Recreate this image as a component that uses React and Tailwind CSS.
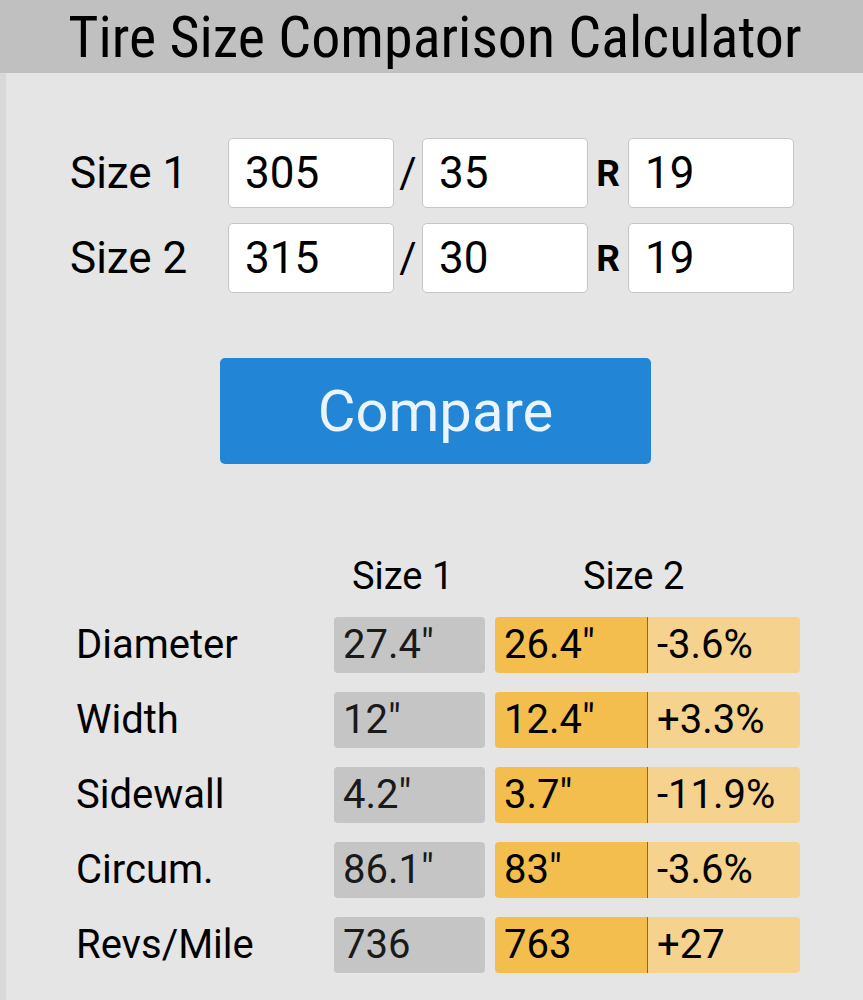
import React, { useState } from 'react';

const rows = [
    { label: 'Diameter', a: '27.4"', b: '26.4"', diff: '-3.6%' },
    { label: 'Width', a: '12"', b: '12.4"', diff: '+3.3%' },
    { label: 'Sidewall', a: '4.2"', b: '3.7"', diff: '-11.9%' },
    { label: 'Circum.', a: '86.1"', b: '83"', diff: '-3.6%' },
    { label: 'Revs/Mile', a: '736', b: '763', diff: '+27' },
];

function SizeInput({ value, onChange }) {
    return (
        <input
            value={value}
            onChange={(e) => onChange(e.target.value)}
            className="w-[166px] h-[70px] bg-white border border-[#c6c6c6] rounded-[5px] pl-[16px] text-[44px] text-black outline-none"
        />
    );
}

function SizeRow({ label, size, setSize }) {
    return (
        <div className="flex items-center">
            <div className="w-[222px] pl-[64px] text-[44px] text-black leading-none whitespace-nowrap">{label}</div>
            <SizeInput value={size.w} onChange={(v) => setSize({ ...size, w: v })} />
            <div className="w-[28px] text-center text-[42px] text-black leading-none">/</div>
            <SizeInput value={size.r} onChange={(v) => setSize({ ...size, r: v })} />
            <div className="w-[40px] text-center text-[37px] text-black font-bold leading-none">R</div>
            <SizeInput value={size.d} onChange={(v) => setSize({ ...size, d: v })} />
        </div>
    );
}

export default function App() {
    const [size1, setSize1] = useState({ w: '305', r: '35', d: '19' });
    const [size2, setSize2] = useState({ w: '315', r: '30', d: '19' });

    return (
        <div className="min-h-[1000px] bg-[#e5e5e5] font-['Roboto',sans-serif]">
            {/* Title bar */}
            <div className="h-[73px] bg-[#c0c0c0] flex items-center justify-center pl-[7px]">
                <h1 className="text-[58px] text-black leading-none font-['Roboto_Condensed','Roboto',sans-serif]">
                    Tire Size Comparison Calculator
                </h1>
            </div>

            <div className="border-l-[6px] border-[#d9d9d9] pt-[65px] pb-[27px]">
                {/* Inputs */}
                <div className="flex flex-col gap-[15px]">
                    <SizeRow label="Size 1" size={size1} setSize={setSize1} />
                    <SizeRow label="Size 2" size={size2} setSize={setSize2} />
                </div>

                {/* Compare button */}
                <div className="flex justify-center pt-[65px] pl-[2px]">
                    <button className="w-[431px] h-[106px] bg-[#2385d6] rounded-[5px] text-[58px] text-[#eaf4fd]">
                        Compare
                    </button>
                </div>

                {/* Results */}
                <div className="pt-[93px] pl-[70px]">
                    <div className="flex text-[38px] text-black leading-none h-[38px]">
                        <div className="w-[276px]" />
                        <div className="w-[231px]">Size 1</div>
                        <div>Size 2</div>
                    </div>
                    <div className="flex flex-col gap-[19px] pt-[22px]">
                        {rows.map((row) => (
                            <div key={row.label} className="flex items-center text-[40px] text-black leading-none">
                                <div className="w-[258px]">{row.label}</div>
                                <div className="w-[151px] h-[56px] bg-[#c5c5c5] rounded-[4px] flex items-center pl-[9px] text-[#1a1a1a]">
                                    {row.a}
                                </div>
                                <div className="ml-[10px] flex h-[56px] rounded-[4px] overflow-hidden">
                                    <div className="w-[153px] bg-[#f3be4e] border-r border-[#7d6a3f] flex items-center pl-[9px]">
                                        {row.b}
                                    </div>
                                    <div className="w-[152px] bg-[#f5d38e] flex items-center pl-[9px]">
                                        {row.diff}
                                    </div>
                                </div>
                            </div>
                        ))}
                    </div>
                </div>
            </div>
        </div>
    );
}
